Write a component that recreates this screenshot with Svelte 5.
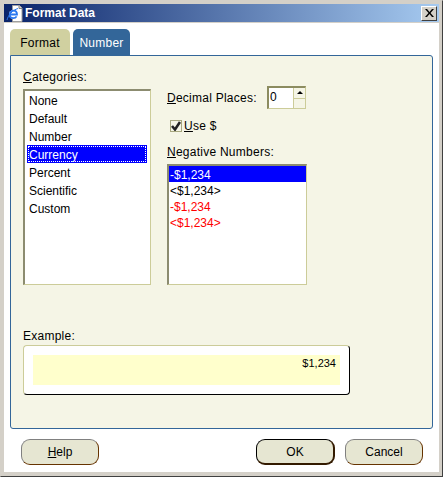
<script>
  const categories = ['None', 'Default', 'Number', 'Currency', 'Percent', 'Scientific', 'Custom']
  const negatives = [
    { text: '-$1,234', red: false },
    { text: '<$1,234>', red: false },
    { text: '-$1,234', red: true },
    { text: '<$1,234>', red: true }
  ]
  let category = $state('Currency')
  let negative = $state(0)
  let useDollar = $state(true)
</script>

<div class="window">
  <header class="titlebar">
    <svg class="appicon" width="17" height="17" viewBox="0 0 17 17">
      <path d="M6.500.500h7l2.500 2.500v13.500H6.500z" fill="#fff" stroke="#a0a0a0" />
      <path d="M13 .500v3h3" fill="#d8d8d8" stroke="#808080" />
      <circle cx="7.500" cy="9.500" r="4.500" fill="#fff" />
      <path d="M4 9.500h7c0-2.500-1.500-3.800-3.400-3.800C5.500 5.700 3.800 7.500 3.800 9.800c0 2.100 1.500 3.400 3.500 3.400 1.400 0 2.600-.6 3.300-1.800" fill="none" stroke="#2a78f0" stroke-width="1.800" />
      <path d="M1 15C2 10.500 6.500 5 12 3.500" fill="none" stroke="#2a78f0" stroke-width="1" />
    </svg>
    <span class="title">Format Data</span>
    <button class="close" aria-label="Close">
      <svg width="9" height="8" viewBox="0 0 9 8"><path d="M0 0h2l2.500 3L7 0h2L5.500 4 9 8H7L4.500 5 2 8H0l3.500-4z" /></svg>
    </button>
  </header>

  <div class="body">
    <div class="tabs">
      <div class="tab">Format</div>
      <div class="tab active">Number</div>
    </div>

    <section class="panel">
      <div class="columns">
        <div class="left">
          <div class="label"><u>C</u>ategories:</div>
          <div class="listbox categories">
            {#each categories as c}
              <button class="cat" class:selected={c === category} onclick={() => (category = c)}>{c}</button>
            {/each}
          </div>
        </div>

        <div class="right">
          <div class="decimal">
            <span class="label"><u>D</u>ecimal Places:</span>
            <div class="spin">
              <div class="spinvalue">0</div>
              <div class="spinbtns">
                <div class="up"><span class="arrow"></span></div>
                <div class="down"></div>
              </div>
            </div>
          </div>
          <button class="check" onclick={() => (useDollar = !useDollar)}>
            <span class="box">
              {#if useDollar}
                <svg width="10" height="10" viewBox="0 0 10 10"><path d="M1 5l3 3.500L9 1" fill="none" stroke="#222" stroke-width="2.600" /></svg>
              {/if}
            </span>
            <span class="label"><u>U</u>se $</span>
          </button>
          <div class="label neglabel"><u>N</u>egative Numbers:</div>
          <div class="listbox negatives">
            {#each negatives as n, i}
              <button class="neg" class:red={n.red} class:selected={i === negative} onclick={() => (negative = i)}>{n.text}</button>
            {/each}
          </div>
        </div>
      </div>

      <div class="label examplelabel">Example:</div>
      <div class="example">
        <div class="sample">$1,234</div>
      </div>
    </section>

    <footer class="buttons">
      <button class="btn"><u>H</u>elp</button>
      <div class="spacer"></div>
      <button class="btn default">OK</button>
      <button class="btn">Cancel</button>
    </footer>
  </div>
</div>

<style>
  :global(body) {
    margin: 0;
    background: #d4d0c8;
  }

  * {
    box-sizing: border-box;
  }

  button {
    font: inherit;
    color: inherit;
    border: 0;
    background: none;
    padding: 0;
    margin: 0;
    display: block;
    text-align: left;
  }

  .window {
    width: 443px;
    height: 477px;
    padding: 4px 4px 4px 4px;
    background: #d4d0c8;
    border: 1px solid #d4d0c8;
    border-right-color: #404040;
    border-bottom-color: #404040;
    font-family: "Liberation Sans", Arial, sans-serif;
    font-size: 12px;
    color: #000;
    display: flex;
    flex-direction: column;
  }

  .titlebar {
    height: 18px;
    margin: -1px -1px 1px -1px;
    flex: none;
    display: flex;
    align-items: center;
    padding: 0 2px 0 2px;
    background: linear-gradient(90deg, #0a246a, #a6caf0);
  }

  .appicon {
    flex: none;
    margin-right: 2px;
  }

  .title {
    color: #fff;
    font-weight: bold;
    font-size: 12px;
    flex: 1;
  }

  .close {
    width: 16px;
    height: 15px;
    background: #d4d0c8;
    border: 1px solid;
    border-color: #fff #404040 #404040 #fff;
    display: flex;
    align-items: center;
    justify-content: center;
  }

  .body {
    flex: 1;
    background: #fff;
    padding: 6px 6px 0 6px;
    margin: 0 -1px 0 -1px;
    display: flex;
    flex-direction: column;
  }

  .tabs {
    display: flex;
    gap: 3px;
    height: 26px;
    flex: none;
  }

  .tab {
    width: 60px;
    background: #d0d0a0;
    border-radius: 5px 5px 0 0;
    display: flex;
    align-items: center;
    justify-content: center;
    font-size: 12px;
    letter-spacing: 0.25px;
    padding-top: 2px;
  }

  .tab.active {
    width: 57px;
    background: #336699;
    color: #fff;
  }

  .panel {
    height: 374px;
    flex: none;
    background: #f5f5e6;
    border: 1px solid #336699;
    border-radius: 0 3px 3px 3px;
    padding: 14px 12px 0 12px;
  }

  .columns {
    display: flex;
    gap: 16px;
    height: 215px;
  }

  .label {
    line-height: 14px;
    letter-spacing: 0.25px;
  }

  .left {
    width: 128px;
  }

  .listbox {
    background: #fff;
    border: 2px solid;
    border-color: #8c8c70 #cccc99 #cccc99 #8c8c70;
    border-right-width: 1px;
    border-bottom-width: 1px;
  }

  .categories {
    margin-top: 5px;
    height: 196px;
    padding: 0 2px;
  }

  .cat {
    width: 120px;
    height: 18px;
    line-height: 20px;
    padding-left: 2px;
  }

  .cat.selected {
    background: #0000ff;
    color: #fff;
    outline: 1px dotted #fff;
    outline-offset: -2px;
  }

  .right {
    width: 140px;
  }

  .decimal {
    display: flex;
    align-items: center;
    justify-content: space-between;
    height: 23px;
    margin-top: 16px;
  }

  .spin {
    width: 39px;
    height: 23px;
    display: flex;
    background: #fff;
    border: 2px solid;
    border-color: #8c8c60 #cccc99 #cccc99 #8c8c60;
    border-right-width: 1px;
    border-bottom-width: 1px;
    margin-right: 1px;
  }

  .spinvalue {
    flex: 1;
    line-height: 18px;
    padding-left: 1px;
    font-size: 12px;
  }

  .spinbtns {
    width: 12px;
    background: #f5f5e6;
    border-left: 1px solid #cccc99;
    display: flex;
    flex-direction: column;
  }

  .up,
  .down {
    flex: 1;
    display: flex;
    align-items: center;
    justify-content: center;
  }

  .up {
    border-bottom: 1px solid #cccc99;
  }

  .arrow {
    width: 0;
    height: 0;
    border-left: 3px solid transparent;
    border-right: 3px solid transparent;
    border-bottom: 3px solid #000;
  }

  .check {
    display: flex;
    align-items: center;
    gap: 2px;
    height: 12px;
    margin: 11px 0 0 3px;
  }

  .box {
    width: 12px;
    height: 12px;
    background: #f5f5e6;
    border: 1px solid #a8a880;
    display: flex;
    align-items: center;
    justify-content: center;
  }

  .neglabel {
    margin-top: 13px;
  }

  .negatives {
    margin-top: 5px;
    height: 121px;
  }

  .neg {
    width: 100%;
    height: 16px;
    line-height: 18px;
    padding-left: 1px;
    overflow: hidden;
  }

  .neg.red {
    color: #ff0000;
  }

  .neg.selected {
    background: #0000ff;
    color: #fff;
  }

  .examplelabel {
    margin-top: 44px;
  }

  .example {
    width: 327px;
    height: 50px;
    margin-top: 2px;
    padding: 9px;
    background: #fff;
    border: 1px solid #cccc99;
    border-right-color: #000;
    border-bottom-color: #000;
    border-radius: 4px;
  }

  .sample {
    height: 30px;
    background: #ffffcc;
    text-align: right;
    font-size: 11px;
    line-height: 14px;
    padding: 1px 4px 0 0;
  }

  .buttons {
    display: flex;
    gap: 10px;
    margin-top: 10px;
    padding: 0 10px 0 11px;
    height: 26px;
    flex: none;
  }

  .spacer {
    flex: 1;
  }

  .btn {
    width: 78px;
    height: 26px;
    background: #e6e6d2;
    border: 1px solid #808080;
    border-right-color: #663300;
    border-bottom-color: #663300;
    border-radius: 9px;
    text-align: center;
  }

  .btn.default {
    width: 79px;
    border: 1px solid #000;
    border-right: 2px solid #331a00;
    border-bottom: 2px solid #331a00;
  }
</style>
